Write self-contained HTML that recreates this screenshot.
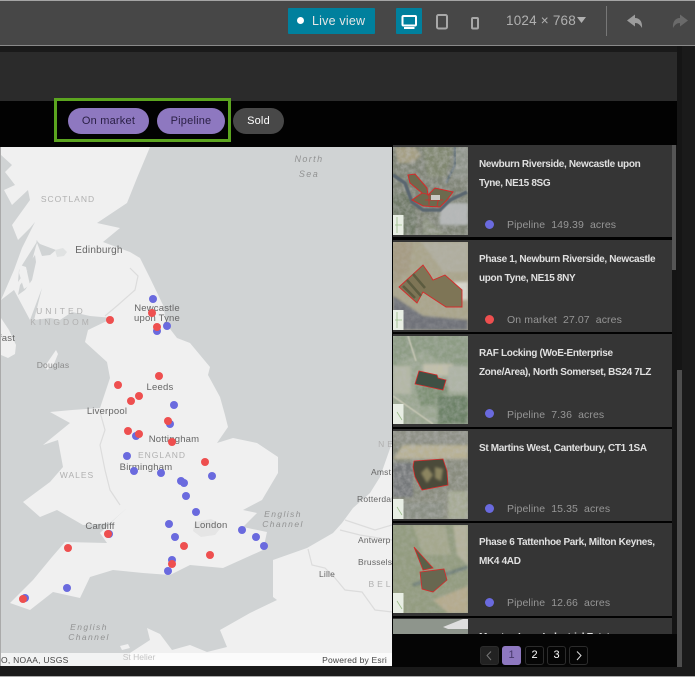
<!DOCTYPE html>
<html><head><meta charset="utf-8"><style>
html,body{margin:0;padding:0;width:695px;height:677px;overflow:hidden;background:#1a1a1a;font-family:"Liberation Sans",sans-serif}
.a{position:absolute}
.card{position:absolute;left:393px;width:279px;background:#353535}
.card>svg{position:absolute;left:0;top:2px;width:75px;height:88px}
.t{position:absolute;left:86px;top:10px;white-space:nowrap;color:#e0e0e0;font-weight:bold;font-size:10px;line-height:19px;letter-spacing:-.33px}
.m{position:absolute;left:114px;top:73px;color:#969696;font-size:10.5px;line-height:14px;white-space:pre;letter-spacing:.1px}
.d{position:absolute;left:91.5px;top:74.5px;width:9px;height:9px;border-radius:50%}
.pill{position:absolute;top:108px;height:26px;border-radius:13px;text-align:center;font-size:11px;line-height:26px;letter-spacing:.2px;color:#2a1f44;background:#8e78c0}
.pg{position:absolute;top:646px;width:17px;height:17px;border:1px solid #2c2c2c;border-radius:3px;background:#050505;color:#fff;font-size:11px;line-height:17px;text-align:center}
svg text{font-family:"Liberation Sans",sans-serif}
</style></head><body>
<div class="a" style="left:0;top:0;width:695px;background:#474747;border-top:1px solid #a5a5a5;border-bottom:1px solid #8a8a8a;box-sizing:border-box;height:46px"></div>
<div class="a" style="left:288px;top:8px;width:87px;height:26px;background:#00809d;border-radius:1px"></div>
<div class="a" style="left:297px;top:17px;width:7px;height:7px;border-radius:50%;background:#fff"></div>
<div class="a" style="left:312px;top:14px;color:#e6e6e6;font-size:12.5px;line-height:15px;letter-spacing:.2px">Live view</div>
<div class="a" style="left:396px;top:8px;width:26px;height:26px;background:#00809d;border-radius:1px"></div>
<svg class="a" style="left:0;top:0" width="695" height="46">
<rect x="402.500" y="16" width="13.500" height="9.500" rx="1" fill="none" stroke="#fff" stroke-width="2"/><rect x="404" y="27" width="10.500" height="2" fill="#fff"/>
<rect x="437" y="15" width="10" height="13.500" rx="1.500" fill="none" stroke="#a8a8a8" stroke-width="2"/>
<rect x="472" y="18" width="6" height="10.500" rx="1" fill="none" stroke="#a8a8a8" stroke-width="2"/>
<path d="M577 17h9l-4.500 6z" fill="#b0b0b0"/>
<rect x="606" y="6" width="1" height="30" fill="#777"/>
<path d="M627 20.500L635 14.500V18C640 18 642.500 22 642 28C640 24.500 638 23 635 23V26.500Z" fill="#9c9c9c"/>
<path d="M688 20.500L680 14.500V18C675 18 672.500 22 673 28C675 24.500 677 23 680 23V26.500Z" fill="#6a6a6a"/>
</svg>
<div class="a" style="left:506px;top:13px;color:#b0b0b0;font-size:13.500px;line-height:16px;letter-spacing:.2px">1024 × 768</div>

<div class="a" style="left:0;top:52px;width:677px;height:49px;background:#2b2b2b"></div>
<div class="a" style="left:677px;top:46px;width:5px;height:621px;background:#151515"></div>
<div class="a" style="left:0;top:101px;width:677px;height:46px;background:#020202"></div>
<div class="a" style="left:54px;top:98px;width:177px;height:44px;box-sizing:border-box;border:3px solid #5ba41f"></div>
<div class="pill" style="left:68px;width:81px">On market</div>
<div class="pill" style="left:157px;width:68px">Pipeline</div>
<div class="pill" style="left:233px;width:51px;background:#484848;color:#fff">Sold</div>

<svg class="a" style="left:0;top:147px;filter:blur(.35px)" width="392" height="519" viewBox="0 147 392 519">
<rect x="0" y="147" width="392" height="519" fill="#d0d3d4"/>
<g fill="#f0f0f0">
<path d="M1 147H150L137 178L127 203L97 223L120 228L103 242L130 252L140 258L150 278L163 305L167 325L177 338L190 343L200 355L210 367L208 375L220 397L225 415L228 427L217 443L233 438L257 443L278 457L278 473L262 500L243 510L257 513L243 527L267 532L263 550L223 568L190 565L170 575L143 573L113 570L90 577L80 598L53 592L30 610L10 603L33 580L52 557L65 542L107 543L100 533L117 517L128 507L110 523L83 525L57 510L40 517L23 502L50 482L63 467L58 440L43 445L70 423L50 412L72 410L100 408L110 378L107 362L85 342L88 330L113 318L90 316L72 312L60 320L50 318L34 320L38 304L42 288L30 320L14 290L1 300Z"/>
<path d="M1 318L9 330L16 345L15 354L8 358L1 355Z"/>
<path d="M45 366L56 350L58 354L54 364L47 370Z"/>
<path d="M393 440L380 477L370 493L353 508L342 523L333 533L307 548L273 560L273 597L277 600L250 613L220 630L227 647L207 652L190 645L172 650L160 634L147 628L150 640L130 653V666H392Z"/>
<path d="M120 646l8-2 2 4-8 2z"/>
</g>
<g fill="#d0d3d4">
<path d="M1 155L12 165L5 172L15 185L4 190L12 205L28 190L30 200L12 225L18 240L30 228L35 222L22 248L14 270L1 300Z"/>
<path d="M35 255L30 262L24 280L20 285L18 295L25 290L32 280L36 262Z"/>
<path d="M38 240L19 270L18 282L25 272L30 268L36 246Z"/>
<path d="M36 240L42 256L50 255L56 250L40 244Z"/>
<path d="M20 265l6 2 4 18-6 4-5-16z" fill="#f0f0f0"/>
<path d="M55 250l8-2 4 4-3 4-7 1z" fill="#e0e2e2"/>
</g>
<g fill="none" stroke="#dcdcdc" stroke-width="1.200">
<path d="M105 316L118 305L135 290L138 276L130 268"/>
<path d="M100 412L105 430L100 445L105 470L110 490L120 505"/>
<path d="M308 549L312 565L325 568L335 578L345 590L362 592L375 610L392 612"/>
<path d="M340 530L360 535L392 540M345 520L375 530L392 525"/>
</g>
<g fill="#e5e5e5"><path d="M195 522l16-3 12 6-8 10-14 2-8-6z"/></g>
<g fill="#7d7d7d" font-size="9" font-style="italic" text-anchor="middle" letter-spacing="1.400" fill-opacity=".75">
<text x="309" y="162">North</text><text x="309" y="177">Sea</text>
<text x="283" y="517" font-size="8.500">English</text><text x="283" y="527" font-size="8.500">Channel</text>
<text x="89" y="630" font-size="8.500">English</text><text x="89" y="640" font-size="8.500">Channel</text>
</g>
<g fill="#b0b0b0" font-size="8.500" text-anchor="middle" letter-spacing="1">
<text x="68" y="202">SCOTLAND</text>
<text x="61" y="314" letter-spacing="3">UNITED</text><text x="61" y="325" letter-spacing="3">KINGDOM</text>
<text x="162" y="458">ENGLAND</text><text x="77" y="478">WALES</text>
<text x="381" y="587" letter-spacing="3">BEL</text><text x="387" y="447" letter-spacing="3">NE</text>
</g>
<g fill="#666" font-size="9.500" text-anchor="middle" letter-spacing=".2">
<text x="99" y="253" font-size="10">Edinburgh</text>
<text x="157" y="311">Newcastle</text><text x="157" y="321">upon Tyne</text>
<text x="7" y="341">fast</text>
<text x="53" y="368" fill="#8a8a8a" font-size="8.500">Douglas</text>
<text x="160" y="390">Leeds</text><text x="107" y="414">Liverpool</text>
<text x="174" y="442">Nottingham</text><text x="146" y="470">Birmingham</text>
<text x="100" y="529">Cardiff</text><text x="211" y="528">London</text>
<text x="327" y="577" font-size="8.500">Lille</text>
<text x="371" y="475" text-anchor="start" font-size="8.500">Amst</text>
<text x="357" y="502" text-anchor="start" font-size="8.500">Rotterdam</text>
<text x="358" y="543" text-anchor="start" font-size="8.500">Antwerp</text>
<text x="358" y="565" text-anchor="start" font-size="8.500">Brussels</text>
</g>
<g fill="#6a6ade">
<circle cx="153" cy="299" r="4"/><circle cx="167" cy="326" r="4"/><circle cx="157" cy="331" r="4"/><circle cx="174" cy="405" r="4"/><circle cx="170" cy="424" r="4"/><circle cx="136" cy="436" r="4"/><circle cx="127" cy="456" r="4"/><circle cx="134" cy="471" r="4"/><circle cx="161" cy="473" r="4"/><circle cx="181" cy="481" r="4"/><circle cx="184" cy="483" r="4"/><circle cx="186" cy="496" r="4"/><circle cx="196" cy="512" r="4"/><circle cx="169" cy="524" r="4"/><circle cx="175" cy="537" r="4"/><circle cx="172" cy="560" r="4"/><circle cx="168" cy="571" r="4"/><circle cx="109" cy="534" r="4"/><circle cx="67" cy="588" r="4"/><circle cx="25" cy="598" r="4"/><circle cx="212" cy="476" r="4"/><circle cx="242" cy="530" r="4"/><circle cx="256" cy="537" r="4"/><circle cx="264" cy="546" r="4"/>
</g>
<g fill="#ee4f4f">
<circle cx="152" cy="313" r="4"/><circle cx="110" cy="320" r="4"/><circle cx="157" cy="327" r="4"/><circle cx="159" cy="376" r="4"/><circle cx="118" cy="385" r="4"/><circle cx="139" cy="396" r="4"/><circle cx="131" cy="401" r="4"/><circle cx="168" cy="421" r="4"/><circle cx="128" cy="431" r="4"/><circle cx="139" cy="434" r="4"/><circle cx="172" cy="442" r="4"/><circle cx="184" cy="546" r="4"/><circle cx="172" cy="564" r="4"/><circle cx="108" cy="534" r="4"/><circle cx="68" cy="548" r="4"/><circle cx="23" cy="599" r="4"/><circle cx="205" cy="462" r="4"/><circle cx="210" cy="555" r="4"/>
</g>
<rect x="0" y="653" width="392" height="13" fill="#fff" fill-opacity=".72"/>
<text x="139" y="660" fill="#c4c4c4" font-size="8.500" text-anchor="middle">St Helier</text>
<text x="1" y="663" fill="#444" font-size="8.500" letter-spacing=".25">O, NOAA, USGS</text>
<text x="387" y="663" fill="#444" font-size="8.500" text-anchor="end" letter-spacing=".2">Powered by Esri</text>
</svg>
<div class="a" style="left:0;top:147px;width:1px;height:519px;background:#aaa"></div>

<div class="a" style="left:392px;top:145px;width:285px;height:490px;background:#020202"></div>
<svg width="0" height="0" style="position:absolute"><defs>
<filter id="b"><feGaussianBlur stdDeviation="1.300"/></filter>
<filter id="c"><feGaussianBlur stdDeviation=".5"/></filter>
<filter id="n" x="0" y="0" width="100%" height="100%"><feTurbulence type="fractalNoise" baseFrequency=".22" numOctaves="3" seed="4"/><feColorMatrix values="0 0 0 0 .5  0 0 0 0 .5  0 0 0 0 .5  1.800 0 0 0 -.55"/></filter>
</defs></svg>

<div class="card" style="top:145px;height:92px"><svg viewBox="0 0 75 88">
<rect width="75" height="88" fill="#7f8476"/>
<g filter="url(#b)"><path d="M2 0h20l6 8-8 8H5z" fill="#a59f84"/><path d="M30 0h30l-8 30H35z" fill="#80876f"/><path d="M60 0h15v32H60z" fill="#8d9389"/><path d="M48 56h27v22H46z" fill="#b4b7b7"/><path d="M0 46h16l8 26-4 16H0z" fill="#6f7a68"/><path d="M30 68l22 20H30z" fill="#8e9482"/></g>
<path d="M62 0v18l-9 18" stroke="#66757a" stroke-width="2.500" fill="none" filter="url(#c)"/>
<rect width="75" height="88" filter="url(#n)" opacity=".55"/>
<path d="M0 28L12 36L19 55L30 63L47 63L57 53L74 45" fill="none" stroke="#5a6670" stroke-width="3.500" filter="url(#c)"/>
<path d="M15 28L22 27L34 41L35 48L42 41L60 45L54 53L47 60L30 59L19 53L29 46L17 36Z" fill="#6d6a4e" stroke="#d62a2a" stroke-width="1"/>
<path d="M29 46L46 50L44 59M32 53h18M36 48v10" fill="none" stroke="#d62a2a" stroke-width=".8"/><path d="M38 48h9v5h-9z" fill="#c9c9c2"/>
<rect x="0" y="68" width="10.500" height="20" fill="#e8eee4"/><path d="M2 78h7M4 70v16" stroke="#9bbd8a" stroke-width=".8"/></svg>
<div class="t">Newburn Riverside, Newcastle upon<br>Tyne, NE15 8SG</div><div class="d" style="background:#6a6ade"></div><div class="m">Pipeline  149.39  acres</div></div>

<div class="card" style="top:240px;height:92px"><svg viewBox="0 0 75 88">
<rect width="75" height="88" fill="#aaa58c"/>
<g filter="url(#b)"><path d="M0 0h20L16 30L0 42z" fill="#a69c84"/><path d="M28 0h47v30H50z" fill="#b0ae9f"/><path d="M0 54L30 74L75 78V88H0z" fill="#6f7279"/><path d="M60 40h15v18H62z" fill="#d6d5cc"/></g>
<rect width="75" height="88" filter="url(#n)" opacity=".22"/>
<path d="M6 45L30 23L37 33L40 38L52 33L69 48L69 65L53 65L30 50L24 61Z" fill="#7e7556" stroke="#d62a2a" stroke-width=".9"/><path d="M14 38l14 16M20 32l12 14M10 44l12 12" stroke="#5d5c40" stroke-width="2.500"/>
<rect x="0" y="68" width="10.500" height="20" fill="#e8eee4"/><path d="M2 78h7M4 70v16" stroke="#9bbd8a" stroke-width=".8"/></svg>
<div class="t">Phase 1, Newburn Riverside, Newcastle<br>upon Tyne, NE15 8NY</div><div class="d" style="background:#ee4f4f"></div><div class="m">On market  27.07  acres</div></div>

<div class="card" style="top:334px;height:93px"><svg viewBox="0 0 75 88">
<rect width="75" height="88" fill="#9aa690"/>
<g filter="url(#b)"><path d="M0 0h75v30H60L28 15L0 30z" fill="#8d9c84"/><path d="M30 28h30v12H30z" fill="#c2c0aa"/><path d="M22 50h35l-8 20H28z" fill="#7e9175"/><path d="M45 60h30v28H45z" fill="#6d8268"/><path d="M0 30h18v28H0z" fill="#b4b8a6"/><path d="M55 30h20v26H55z" fill="#aeb4a5"/></g>
<rect width="75" height="88" filter="url(#n)" opacity=".4"/>
<path d="M15 0l8 25M0 60l40 28" stroke="#c6c6b4" stroke-width="1.500" fill="none" filter="url(#c)"/>
<path d="M26 35L44 39L45 42L53 44L50 54L22 48Z" fill="#3f5044" stroke="#d62a2a" stroke-width=".8"/>
<rect x="0" y="68" width="10.500" height="20" fill="#e8eee4"/><path d="M4 76l5 8" stroke="#9bbd8a" stroke-width=".8"/></svg>
<div class="t">RAF Locking (WoE-Enterprise<br>Zone/Area), North Somerset, BS24 7LZ</div><div class="d" style="top:75px;background:#6a6ade"></div><div class="m" style="top:73.500px">Pipeline  7.36  acres</div></div>

<div class="card" style="top:429px;height:92px"><svg viewBox="0 0 75 88">
<rect width="75" height="88" fill="#898c7e"/>
<g filter="url(#b)"><path d="M10 14h65v14H0z" fill="#b8b194"/><path d="M0 0h75v12H0z" fill="#8e9086"/><path d="M0 32h20v34H0z" fill="#75787a"/><path d="M0 72h50v16H0z" fill="#8a8f84"/><path d="M55 60h20v28H55z" fill="#a6aa94"/></g>
<rect width="75" height="88" filter="url(#n)" opacity=".5"/>
<path d="M21 30L50 28L54 40L55 54L29 59L22 46L20 36Z" fill="#4b4a3a" stroke="#d62a2a" stroke-width=".8"/><g filter="url(#b)"><path d="M28 42l6-6 6 8-6 8zM42 36l8 2-2 12-6-3z" fill="#8c8560"/></g>
<rect x="0" y="68" width="10.500" height="20" fill="#e8eee4"/><path d="M4 76l5 8" stroke="#9bbd8a" stroke-width=".8"/></svg>
<div class="t">St Martins West, Canterbury, CT1 1SA</div><div class="d" style="background:#6a6ade"></div><div class="m">Pipeline  15.35  acres</div></div>

<div class="card" style="top:523px;height:93px"><svg viewBox="0 0 75 88">
<rect width="75" height="88" fill="#939c80"/>
<g filter="url(#b)"><path d="M20 0h32l6 30H30z" fill="#a5a88e"/><path d="M60 0h15v40L64 30z" fill="#b4b29c"/><path d="M40 75l35-14v27H55z" fill="#b5ab8e"/><path d="M20 60l55-18" stroke="#6a7a78" stroke-width="3" fill="none"/></g>
<rect width="75" height="88" filter="url(#n)" opacity=".25"/>
<path d="M21 22L40 43L30 45Z" fill="#5a6048" stroke="#d62a2a" stroke-width=".8"/><path d="M27 47L51 44L54 55L40 67L29 64Z" fill="#686750" stroke="#d62a2a" stroke-width=".8"/>
<rect x="0" y="68" width="10.500" height="20" fill="#e8eee4"/><path d="M4 76l5 8" stroke="#9bbd8a" stroke-width=".8"/></svg>
<div class="t">Phase 6 Tattenhoe Park, Milton Keynes,<br>MK4 4AD</div><div class="d" style="background:#6a6ade"></div><div class="m">Pipeline  12.66  acres</div></div>

<div class="card" style="top:618px;height:17px;overflow:hidden"><svg viewBox="0 0 75 88" style="top:1px"><rect width="75" height="88" fill="#8e958c"/><path d="M50 8l20-8h5v10H55z" fill="#dedede"/></svg>
<div class="t">Marston Lane Industrial Estate</div></div>

<div class="a" style="left:672px;top:145px;width:5px;height:490px;background:#141414"></div>
<div class="a" style="left:672px;top:145px;width:4px;height:125px;background:#555"></div>
<div class="a" style="left:677px;top:370px;width:5px;height:297px;background:#4d4d4d"></div>

<div class="a" style="left:392px;top:634px;width:285px;height:33px;background:#050505"></div>
<div class="pg" style="left:480px;background:#222;color:#777"><svg width="17" height="17"><path d="M10 4.500L6 8.500L10 13" fill="none" stroke="#777" stroke-width="1"/></svg></div>
<div class="pg" style="left:502px;background:#8e78c0;border-color:#8e78c0;color:#45386a">1</div>
<div class="pg" style="left:525px">2</div>
<div class="pg" style="left:547px">3</div>
<div class="pg" style="left:569px"><svg width="17" height="17"><path d="M7 4.500L11 8.500L7 13" fill="none" stroke="#ddd" stroke-width="1"/></svg></div>
<div class="a" style="left:0;top:676px;width:695px;height:1px;background:#aaa"></div>
</body></html>
